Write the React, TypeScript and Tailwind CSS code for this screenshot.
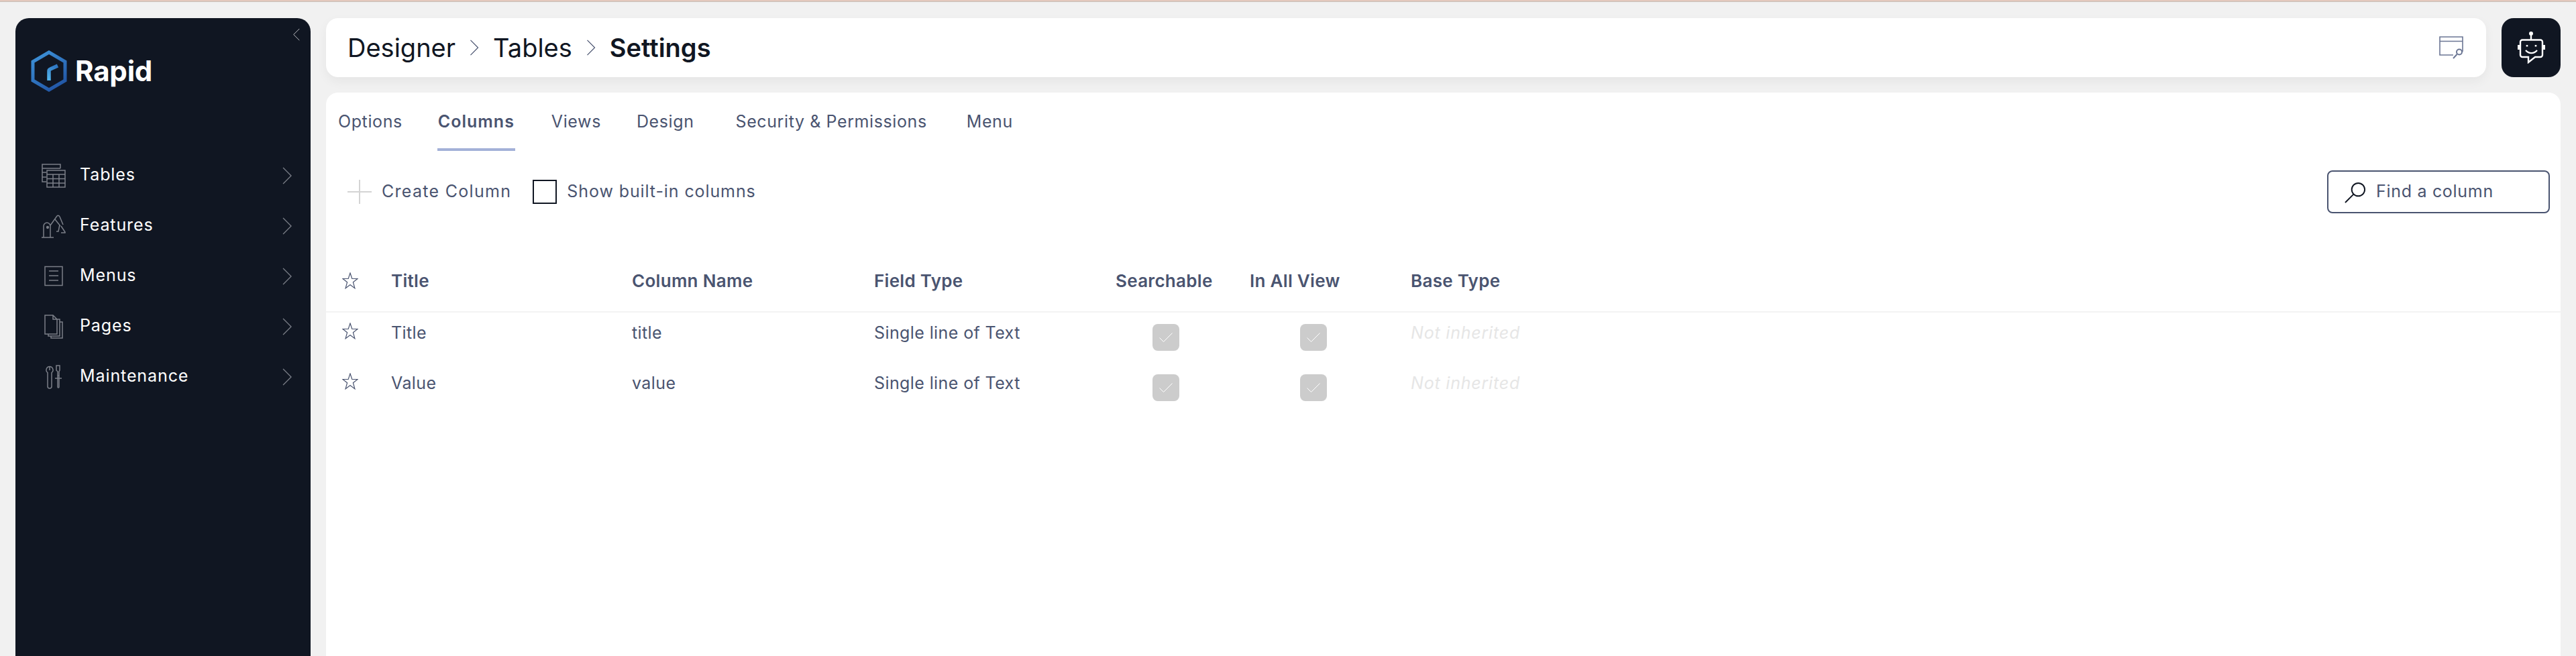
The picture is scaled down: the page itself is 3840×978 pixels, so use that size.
import React from "react";

const font = "font-['Inter','Liberation_Sans',sans-serif]";

function Chevron({ cls }: { cls: string }) {
  return (
    <svg viewBox="0 0 14 26" className={cls} fill="none" stroke="currentColor" strokeWidth="1.3">
      <path d="M1 1l12 12L1 25" />
    </svg>
  );
}

function Star() {
  return (
    <svg viewBox="0 0 24 25" className="w-[24px] h-[25px] text-[#4a5470]" fill="none" stroke="currentColor" strokeWidth="1.2">
      <path d="M12 1l2.8 8.500H23l-6.600 5.200 2.500 9L12 18.500 5.100 23.700l2.500-9L1 9.500h8.200z" />
    </svg>
  );
}

function Check() {
  return (
    <div className="w-[40px] h-[40px] rounded-[8px] bg-[#cccccc] flex items-center justify-center">
      <svg viewBox="0 0 20 14" className="w-[20px] h-[14px] text-white" fill="none" stroke="currentColor" strokeWidth="1">
        <path d="M0.500 7.500l6 6L19.500 0.500" />
      </svg>
    </div>
  );
}

const icon = "w-[36px] h-[36px] text-[#7b7f88]";

const navIcons: Record<string, React.ReactNode> = {
  Tables: (
    <svg viewBox="0 0 36 36" className={icon} fill="none" stroke="currentColor" strokeWidth="1.5">
      <path d="M28 7V1H1v26h6M1 7h27M1 13h6M1 20h6" />
      <path d="M8 10h27v25H8zM8 16h27M8 22.500h27M8 29h27M17 16v19M26 16v19" />
    </svg>
  ),
  Features: (
    <svg viewBox="0 0 36 36" className={icon} fill="none" stroke="currentColor" strokeWidth="1.5">
      <path d="M0 35h18M3 35V18a5 5 0 0 1 10 0v17" />
      <circle cx="9" cy="20" r="1.400" fill="currentColor" />
      <path d="M13 17L23 3a2.500 2.500 0 0 1 4 1l5 12M20 8l8 10M27 16l-2 10h-3M29 18l6 9v1h-6" />
    </svg>
  ),
  Menus: (
    <svg viewBox="0 0 36 36" className={icon} fill="none" stroke="currentColor" strokeWidth="1.5">
      <path d="M5 3.500h26v28H5zM11 10h14M11 17h14M11 24h14" />
    </svg>
  ),
  Pages: (
    <svg viewBox="0 0 36 36" className={icon} fill="none" stroke="currentColor" strokeWidth="1.5">
      <path d="M5 1h12l6 6v22H5zM17 1v6h6M23 7h4v25H10v-3M27 11h4v24H14v-3" />
    </svg>
  ),
  Maintenance: (
    <svg viewBox="0 0 36 36" className={icon} fill="none" stroke="currentColor" strokeWidth="1.5">
      <path d="M12 2.500a5 5 0 0 0-3 9V32a2.500 2.500 0 0 0 6 0V11.500a5 5 0 0 0-3-9zM12 3v5" />
      <path d="M22 1h5v7l-1 2v6h-2v-6l-2-2zM24 16h2v17a1 1 0 0 1-2 0zM20 20h10" />
    </svg>
  ),
};

const nav = ["Tables", "Features", "Menus", "Pages", "Maintenance"];
const tabs = [
  { t: "Options", c: "" },
  { t: "Columns", c: "font-semibold h-[62px] border-b-4 border-[#a3b1d8] tracking-[1px] px-[1px]" },
  { t: "Views", c: "ml-[2px]" },
  { t: "Design", c: "ml-[1px]" },
  { t: "Security & Permissions", c: "ml-[10px]" },
  { t: "Menu", c: "ml-[7px]" },
];

function Sidebar() {
  return (
    <aside className="w-[440px] ml-[23px] mr-[23px] shrink-0 bg-[#101622] rounded-t-[20px] relative h-[951px]">
      <Chevron cls="absolute right-[16px] top-[15px] w-[10px] h-[19px] rotate-180 text-[#c8c9cd]" />
      <div className="flex items-center pt-[47px] pl-[23px] gap-[12px] h-[110px]">
        <svg viewBox="0 0 54 62" className="w-[54px] h-[62px]" fill="none">
          <defs>
            <linearGradient id="hx" x1="0" y1="0" x2="0.6" y2="1">
              <stop offset="0" stopColor="#3f96dc" />
              <stop offset="1" stopColor="#2359a8" />
            </linearGradient>
            <linearGradient id="rm" x1="0.6" y1="0" x2="0.2" y2="1">
              <stop offset="0" stopColor="#2f78c4" />
              <stop offset="1" stopColor="#52b4ec" />
            </linearGradient>
          </defs>
          <path d="M27 3l24 14v28L27 59 3 45V17z" stroke="url(#hx)" strokeWidth="5" />
          <path d="M27 45V31a3 3 0 0 1 2-3l11-5" stroke="url(#rm)" strokeWidth="5.500" />
        </svg>
        <span className="text-white text-[42px] font-bold tracking-[-0.2px] leading-none">Rapid</span>
      </div>
      <nav className="mt-[107px] flex flex-col gap-[39px]">
        {nav.map((n) => (
          <div key={n} className="flex items-center h-[36px] pl-[39px] pr-[28px]">
            {navIcons[n]}
            <span className="ml-[21px] flex-1 text-white text-[25px] tracking-[0.9px] -translate-y-px">{n}</span>
            <Chevron cls="w-[14px] h-[26px] text-[#7b7f88]" />
          </div>
        ))}
      </nav>
    </aside>
  );
}

function Header() {
  return (
    <div className="flex gap-[23px] h-[88px]">
      <div className="flex-1 bg-white rounded-[18px] shadow-[0_6px_16px_rgba(0,0,0,0.05)] flex items-center pl-[32px] pr-[34px] text-[#101622] text-[38px]">
        <span>Designer</span>
        <Chevron cls="w-[14px] h-[24px] mx-[21px] text-[#4a5470]" />
        <span>Tables</span>
        <Chevron cls="w-[14px] h-[24px] mx-[21px] text-[#4a5470]" />
        <span className="font-semibold">Settings</span>
        <svg viewBox="0 0 36 34" className="ml-auto w-[36px] h-[34px] text-[#6b7694]" fill="none" stroke="currentColor" strokeWidth="1.6">
          <path d="M21 28H1V1h34v22M1 7.500h34" />
          <circle cx="30" cy="23.500" r="4" strokeWidth="2" />
          <path d="M26.500 27L21 33" strokeWidth="2" />
        </svg>
      </div>
      <div className="w-[88px] bg-[#101622] rounded-[18px] flex items-center justify-center">
        <svg viewBox="0 0 41 48" className="w-[41px] h-[48px] text-white" fill="none" stroke="currentColor" strokeWidth="2.400">
          <circle cx="20" cy="3" r="3" fill="currentColor" stroke="none" />
          <path d="M20 3v9" />
          <path d="M7 12.500h27a3 3 0 0 1 3 3V35a3 3 0 0 1-3 3H26l-10 8v-8H7a3 3 0 0 1-3-3V15.500a3 3 0 0 1 3-3z" />
          <path d="M1.500 20v7M39.500 20v7" strokeWidth="3" />
          <path d="M14 20v2.500M27 20v2.500" strokeWidth="2.600" />
          <path d="M12 28c5 5.500 12 5.500 17 0" />
        </svg>
      </div>
    </div>
  );
}

function Tabs() {
  return (
    <div className="flex h-[94px] pl-[18px] pt-[25px] gap-[52px] text-[#4a5470] text-[25px] tracking-[0.6px]">
      {tabs.map(({ t, c }) => (
        <div key={t} className={c}>
          {t}
        </div>
      ))}
    </div>
  );
}

function Toolbar() {
  return (
    <div className="flex items-center h-[64px] mt-[22px] pl-[32px] pr-[16px] text-[#4a5470] text-[25px] tracking-[1.3px]">
      <svg viewBox="0 0 36 36" className="w-[36px] h-[36px] text-[#d4d4d4]" stroke="currentColor" strokeWidth="2">
        <path d="M18 0v36M0 18h36" />
      </svg>
      <span className="ml-[15px]">Create Column</span>
      <div className="ml-[32px] w-[36px] h-[36px] border-2 border-[#101622]" />
      <span className="ml-[15px] tracking-[0.9px]">Show built-in columns</span>
      <div className="ml-auto w-[332px] h-[64px] border-2 border-[#4a5470] rounded-[8px] flex items-center pl-[24px] tracking-[0.7px]">
        <svg viewBox="0 0 34 34" className="w-[33px] h-[33px] text-[#101622]" fill="none" stroke="currentColor" strokeWidth="2">
          <circle cx="21" cy="13" r="10" />
          <path d="M14 20L1 33" />
        </svg>
        <span className="ml-[14px]">Find a column</span>
      </div>
    </div>
  );
}

const cols = "grid grid-cols-[73px_359px_361px_360px_200px_240px_1fr] pl-[24px]";

function Table() {
  return (
    <div className="mt-[55px] text-[#4a5470] text-[25px] tracking-[0.4px]">
      <div className={`${cols} items-center h-[93px] border-b-2 border-[#f3f3f3] font-semibold text-[26px] tracking-[0.3px]`}>
        <Star />
        <span>Title</span>
        <span>Column Name</span>
        <span>Field Type</span>
        <span>Searchable</span>
        <span>In All View</span>
        <span>Base Type</span>
      </div>
      {[
        ["Title", "title"],
        ["Value", "value"],
      ].map(([a, b]) => (
        <div key={a} className={`${cols} items-start h-[75px] pt-[15px] leading-[30px]`}>
          <Star />
          <span>{a}</span>
          <span>{b}</span>
          <span>Single line of Text</span>
          <div className="pl-[55px] pt-[2px]"><Check /></div>
          <div className="pl-[75px] pt-[2px]"><Check /></div>
          <span className="italic text-[#e6e6e6] tracking-[0.8px]">Not inherited</span>
        </div>
      ))}
    </div>
  );
}

export default function App() {
  return (
    <div className={`${font} w-[3840px] h-[978px] overflow-hidden bg-[#f1f1f1]`}>
      <div className="h-[3px] bg-[#e3c8bc] border-b border-[#c9c0bb]" />
      <div className="flex pt-[24px]">
        <Sidebar />
        <main className="flex-1 pr-[23px] flex flex-col gap-[23px]">
          <Header />
          <section className="bg-white rounded-t-[18px] h-[840px]">
            <Tabs />
            <Toolbar />
            <Table />
          </section>
        </main>
      </div>
    </div>
  );
}
